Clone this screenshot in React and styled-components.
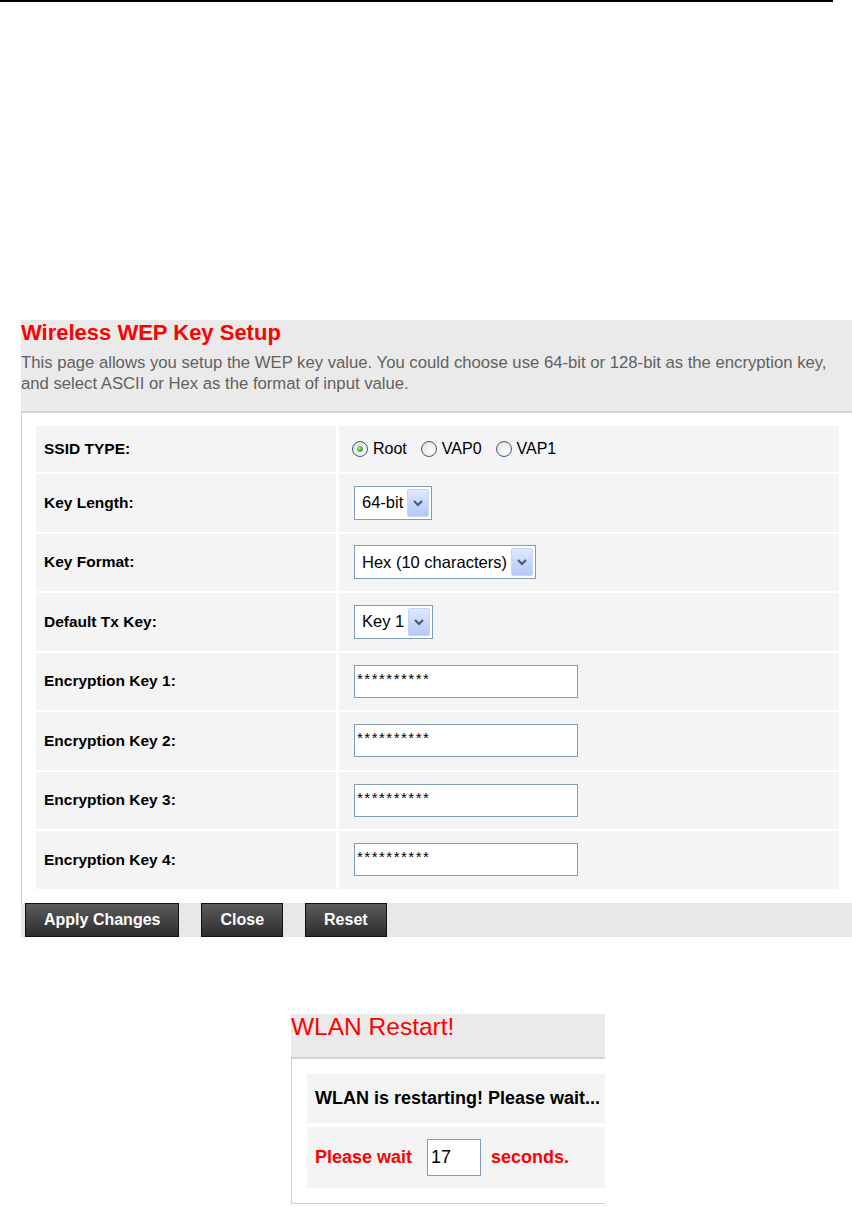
import React from 'react'
import styled, { createGlobalStyle } from 'styled-components'

const GlobalStyle = createGlobalStyle`
  html, body {
    margin: 0;
    padding: 0;
    background: #fff;
  }
  body {
    font-family: "Liberation Sans", Arial, sans-serif;
  }
  * { box-sizing: border-box; }
`

const Page = styled.div`
  width: 852px;
  height: 1207px;
  overflow: hidden;
`

const TopRule = styled.div`
  width: 833px;
  height: 2px;
  background: #000;
`

const Panel = styled.section`
  margin-left: ${props => props.left}px;
  margin-top: ${props => props.top}px;
  width: ${props => props.width}px;
  overflow: hidden;
`

const Header = styled.div`
  background: #eaeaea;
  border-bottom: 2px solid #d3d3d3;
  padding-bottom: ${props => props.pb}px;
`

const Title = styled.h1`
  margin: 0;
  color: #f00;
  font-size: ${props => props.size}px;
  font-weight: ${props => props.bold ? 'bold' : 'normal'};
  line-height: 26px;
  white-space: nowrap;
`

const Desc = styled.p`
  margin: 5.5px 0 0;
  color: #616161;
  font-size: 16.7px;
  line-height: 21px;
`

const Body = styled.div`
  background: #fff;
  border-left: 1px solid #cfcfcf;
  border-bottom: ${props => props.bottomLine ? '1px solid #cfcfcf' : 'none'};
  padding: ${props => props.pad};
`

const FormGrid = styled.div`
  display: grid;
  grid-template-columns: 300px 1fr;
  grid-auto-rows: 57.5px;
  grid-template-rows: 46px;
  column-gap: 3px;
  row-gap: 2px;
`

const Cell = styled.div`
  background: #f4f4f4;
  display: flex;
  align-items: center;
  padding-left: ${props => props.label ? 8 : 15}px;
`

const Label = styled.span`
  font-size: 15.5px;
  font-weight: bold;
  color: #000;
`

const RadioGroup = styled.div`
  display: flex;
  align-items: center;
  margin-left: -2px;
`

const RadioItem = styled.label`
  display: flex;
  align-items: center;
  gap: 5px;
  margin-right: 14px;
  font-size: 16px;
  color: #000;
`

const RadioDot = styled.span`
  width: 16px;
  height: 16px;
  border-radius: 50%;
  border: 1px solid #3a5f86;
  background: radial-gradient(circle at 65% 65%, #ffffff 0%, #ecebe4 55%, #d6d5cb 100%);
  display: inline-flex;
  align-items: center;
  justify-content: center;

  &::after {
    content: '';
    width: 6px;
    height: 6px;
    border-radius: 50%;
    background: ${props => props.checked
      ? 'radial-gradient(circle at 35% 35%, #a8eea0 0%, #3cbf3c 50%, #1f9a1f 100%)'
      : 'transparent'};
  }
`

const SelectBox = styled.div`
  display: flex;
  align-items: center;
  height: 34px;
  border: 1px solid #7f9db9;
  background: #fff;
  padding: 0 2px 0 7px;
  font-size: 16.5px;
  color: #000;
`

const SelectText = styled.span`
  margin-right: 4px;
  white-space: nowrap;
`

const Arrow = styled.span`
  width: 22px;
  height: 28px;
  border: 1px solid #c3d3fb;
  border-radius: 2px;
  background: linear-gradient(#dfe8fd, #b4c9f6);
  display: flex;
  align-items: center;
  justify-content: center;
`

const KeyInput = styled.div`
  width: ${props => props.w}px;
  height: ${props => props.h}px;
  border: 1px solid #7f9db9;
  background: #fff;
  color: #000;
  font-size: ${props => props.fs}px;
  padding-left: ${props => props.pl}px;
  letter-spacing: ${props => props.ls || 0}px;
  line-height: ${props => props.lh}px;
`

const ButtonBar = styled.div`
  display: flex;
  gap: 22px;
  height: 34px;
  background: #e8e8e8;
  padding-left: 4px;
`

const DarkButton = styled.button`
  height: 34px;
  padding: 0 18px;
  border: 1px solid #111;
  background: linear-gradient(#5c5c5c, #2c2c2c);
  color: #fff;
  font-family: "Liberation Sans", Arial, sans-serif;
  font-size: 16px;
  font-weight: bold;
  cursor: pointer;
`

const StatusList = styled.div`
  display: flex;
  flex-direction: column;
  gap: 4px;
`

const StatusRow = styled.div`
  background: #f4f4f4;
  height: ${props => props.h}px;
  display: flex;
  align-items: center;
  padding-left: 8px;
  font-size: 18px;
  font-weight: bold;
  white-space: nowrap;
  color: ${props => props.red ? '#f00' : '#000'};
`

const CountBox = styled(KeyInput)`
  margin: 0 10px 0 15px;
  font-weight: normal;
  color: #000;
`

const Chevron = () => (
  <svg width="12" height="10" viewBox="0 0 12 10">
    <polyline points="2,3 6,7 10,3" fill="none" stroke="#4a5a7c" strokeWidth="2.2" />
  </svg>
)

const Select = ({ value }) => (
  <SelectBox>
    <SelectText>{value}</SelectText>
    <Arrow><Chevron /></Arrow>
  </SelectBox>
)

const Radio = ({ label, checked }) => (
  <RadioItem>
    <RadioDot checked={checked} />
    {label}
  </RadioItem>
)

const keys = [1, 2, 3, 4]

export default function App() {
  return (
    <Page>
      <GlobalStyle />
      <TopRule />

      <Panel left={21} top={318} width={831}>
        <Header pb={17.5}>
          <Title size={22} bold>Wireless WEP Key Setup</Title>
          <Desc>
            This page allows you setup the WEP key value. You could choose use 64-bit or 128-bit as the encryption key, and select ASCII or Hex as the format of input value.
          </Desc>
        </Header>
        <Body pad="13px 13px 14px 14px">
          <FormGrid>
            <Cell label><Label>SSID TYPE:</Label></Cell>
            <Cell>
              <RadioGroup>
                <Radio label="Root" checked />
                <Radio label="VAP0" />
                <Radio label="VAP1" />
              </RadioGroup>
            </Cell>

            <Cell label><Label>Key Length:</Label></Cell>
            <Cell><Select value="64-bit" /></Cell>

            <Cell label><Label>Key Format:</Label></Cell>
            <Cell><Select value="Hex (10 characters)" /></Cell>

            <Cell label><Label>Default Tx Key:</Label></Cell>
            <Cell><Select value="Key 1" /></Cell>

            {keys.map(k => (
              <React.Fragment key={k}>
                <Cell label><Label>Encryption Key {k}:</Label></Cell>
                <Cell>
                  <KeyInput w={224} h={33} fs={15} pl={2} ls={1.5} lh={26}>**********</KeyInput>
                </Cell>
              </React.Fragment>
            ))}
          </FormGrid>
        </Body>
        <ButtonBar>
          <DarkButton>Apply Changes</DarkButton>
          <DarkButton>Close</DarkButton>
          <DarkButton>Reset</DarkButton>
        </ButtonBar>
      </Panel>

      <Panel left={291} top={77} width={314}>
        <Header pb={17}>
          <Title size={24.5}>WLAN Restart!</Title>
        </Header>
        <Body pad="15px 0 15px 15px" bottomLine>
          <StatusList>
            <StatusRow h={49}>WLAN is restarting! Please wait...</StatusRow>
            <StatusRow h={61} red>
              Please wait
              <CountBox w={54} h={37} fs={18} pl={3} lh={35}>17</CountBox>
              seconds.
            </StatusRow>
          </StatusList>
        </Body>
      </Panel>
    </Page>
  )
}
